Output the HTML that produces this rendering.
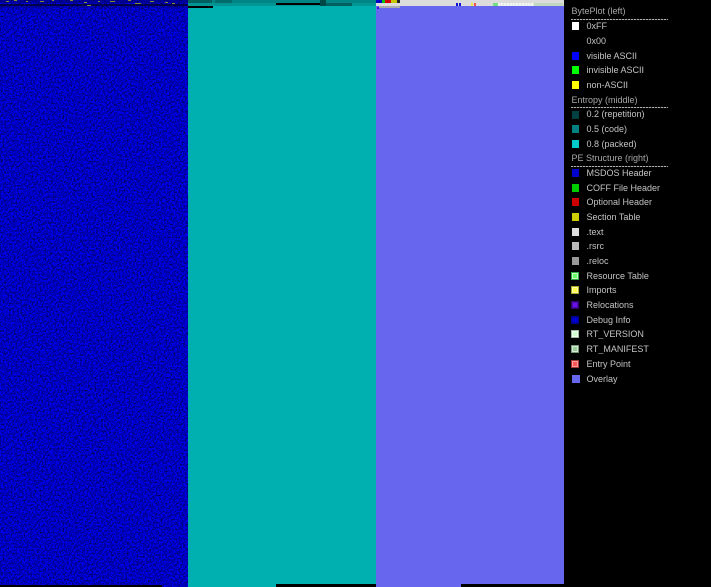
<!DOCTYPE html>
<html><head><meta charset="utf-8"><style>
html,body{margin:0;padding:0;background:#000;width:711px;height:587px;overflow:hidden}
.a{position:absolute}
.t{position:absolute;left:586.5px;font:9px/12px "Liberation Sans",sans-serif;color:#c4c4c4;white-space:nowrap;filter:blur(.35px)}
.h{left:571.5px;color:#a8a8a8}
.s{position:absolute;left:571.5px;width:7.5px;height:8px}
.b{box-sizing:border-box;left:571px;width:8px;height:8px;border:1px solid}
.l{position:absolute;left:571px;width:97px;height:1px;background:repeating-linear-gradient(90deg,#b0b0b0 0 2px,#333 2px 3px)}
</style></head><body>
<svg class="a" style="left:0;top:0" width="188" height="587">
<filter id="n" x="0" y="0" width="100%" height="100%" color-interpolation-filters="sRGB"><feTurbulence type="fractalNoise" baseFrequency="0.62" numOctaves="3" seed="9"/><feColorMatrix values="0 0 0 0 0 0 0 0 0 0 1.05 1.05 0 0 -0.3 0 0 0 0 1"/></filter>
<rect width="188" height="587" fill="#0000c0"/>
<rect width="188" height="587" filter="url(#n)"/>
<rect y="0" width="188" height="3" fill="#000070" opacity=".55"/>
<rect y="4" width="188" height="2" fill="#000030" opacity=".8"/>
<rect y="6" width="188" height="2" fill="#000070" opacity=".3"/>
<g fill="#8a8a38">
<rect x="6" y="1" width="3" height="1"/><rect x="14" y="0" width="3" height="1"/><rect x="26" y="1" width="2" height="1"/><rect x="40" y="1" width="4" height="1"/><rect x="52" y="0" width="2" height="1"/><rect x="70" y="0" width="3" height="1"/><rect x="84" y="2" width="3" height="1"/><rect x="98" y="1" width="2" height="1"/><rect x="110" y="1" width="5" height="1"/><rect x="128" y="0" width="3" height="1"/><rect x="150" y="1" width="4" height="1"/><rect x="165" y="2" width="3" height="1"/><rect x="87" y="5" width="4" height="1"/><rect x="135" y="3" width="6" height="1"/><rect x="172" y="3" width="3" height="1"/></g>
<rect y="585" width="162" height="2" fill="#000"/>
</svg>
<div class="a" style="left:188px;top:0;width:188px;height:587px;background:#00b0b0"></div>
<div class="a" style="left:188px;top:0;width:188px;height:3px;background:#008484"></div>
<div class="a" style="left:188px;top:3px;width:188px;height:3px;background:#009595"></div>
<div class="a" style="left:188px;top:0;width:24px;height:3px;background:#006060"></div>
<div class="a" style="left:215px;top:0;width:17px;height:3px;background:#006c6c"></div>
<div class="a" style="left:276px;top:3px;width:44px;height:2px;background:#000"></div>
<div class="a" style="left:320px;top:0;width:6px;height:6px;background:#004848"></div>
<div class="a" style="left:326px;top:3px;width:26px;height:3px;background:#006060"></div>
<div class="a" style="left:188px;top:6px;width:25px;height:2px;background:#000"></div>
<div class="a" style="left:276px;top:584px;width:100px;height:3px;background:#000"></div>
<div class="a" style="left:376px;top:0;width:188px;height:587px;background:#6666ee"></div>
<div class="a" style="left:376px;top:0;width:188px;height:6px;background:#dcdcdc"></div>
<div class="a" style="left:376px;top:0;width:6px;height:3px;background:#0000c8"></div>
<div class="a" style="left:382px;top:0;width:3px;height:3px;background:#00c800"></div>
<div class="a" style="left:385px;top:0;width:6px;height:3px;background:#d00000"></div>
<div class="a" style="left:391px;top:0;width:6px;height:3px;background:#c8c800"></div>
<div class="a" style="left:397px;top:0;width:3px;height:3px;background:#222"></div>
<div class="a" style="left:379px;top:6px;width:21px;height:2px;background:#aaa"></div>
<div class="a" style="left:377px;top:7px;width:2px;height:2px;background:#5010d0"></div>
<div class="a" style="left:456px;top:3px;width:2px;height:3px;background:#1010d0"></div>
<div class="a" style="left:459px;top:3px;width:2px;height:3px;background:#1010d0"></div>
<div class="a" style="left:471px;top:3px;width:2px;height:3px;background:#f0e040"></div>
<div class="a" style="left:474px;top:3px;width:2px;height:3px;background:#f05050"></div>
<div class="a" style="left:493px;top:3px;width:5px;height:3px;background:#70e080"></div>
<div class="a" style="left:498px;top:3px;width:36px;height:3px;background:repeating-linear-gradient(90deg,#f0f3f0 0 2px,#e2ebe2 2px 3px)"></div>
<div class="a" style="left:534px;top:3px;width:29px;height:3px;background:#c0d8c0"></div>
<div class="a" style="left:461px;top:584px;width:103px;height:3px;background:#000"></div>

<div class="t h" style="top:5px">BytePlot (left)</div><div class="l" style="top:19px"></div>
<div class="s" style="top:22px;background:#fff"></div><div class="t" style="top:20px">0xFF</div>
<div class="t" style="top:35px">0x00</div>
<div class="s" style="top:52px;background:#0000ff"></div><div class="t" style="top:49.5px">visible ASCII</div>
<div class="s" style="top:66px;background:#00ff00"></div><div class="t" style="top:64px">invisible ASCII</div>
<div class="s" style="top:81px;background:#ffff00"></div><div class="t" style="top:79px">non-ASCII</div>
<div class="t h" style="top:93.5px">Entropy (middle)</div><div class="l" style="top:107px"></div>
<div class="s" style="top:111px;background:#004040"></div><div class="t" style="top:108px">0.2 (repetition)</div>
<div class="s" style="top:125px;background:#008080"></div><div class="t" style="top:123px">0.5 (code)</div>
<div class="s" style="top:140px;background:#00cccc"></div><div class="t" style="top:137.5px">0.8 (packed)</div>
<div class="t h" style="top:152px">PE Structure (right)</div><div class="l" style="top:166px"></div>
<div class="s" style="top:169px;background:#0000cc"></div><div class="t" style="top:167px">MSDOS Header</div>
<div class="s" style="top:184px;background:#00cc00"></div><div class="t" style="top:181.5px">COFF File Header</div>
<div class="s" style="top:198px;background:#cc0000"></div><div class="t" style="top:196px">Optional Header</div>
<div class="s" style="top:213px;background:#cccc00"></div><div class="t" style="top:211px">Section Table</div>
<div class="s" style="top:228px;background:#dddddd"></div><div class="t" style="top:225.5px">.text</div>
<div class="s" style="top:242px;background:#bbbbbb"></div><div class="t" style="top:240px">.rsrc</div>
<div class="s" style="top:257px;background:#999999"></div><div class="t" style="top:255px">.reloc</div>
<div class="s b" style="top:272px;background:#66ff66;border-color:#2fae3f;box-shadow:inset 0 0 0 1px #c8f8c8"></div><div class="t" style="top:269.5px">Resource Table</div>
<div class="s b" style="top:286px;background:#ffff44;border-color:#a8a820;box-shadow:inset 0 0 0 1px #f8f8b0"></div><div class="t" style="top:284px">Imports</div>
<div class="s b" style="top:301px;background:#6a10ee;border-color:#330077;box-shadow:inset 0 0 0 1px #4a10a0"></div><div class="t" style="top:299px">Relocations</div>
<div class="s b" style="top:316px;background:#0000dd;border-color:#000088;box-shadow:inset 0 0 0 1px #0000aa"></div><div class="t" style="top:313.5px">Debug Info</div>
<div class="s b" style="top:330px;background:#ccffcc;border-color:#99bb99;box-shadow:inset 0 0 0 1px #f4fff4"></div><div class="t" style="top:328px">RT_VERSION</div>
<div class="s b" style="top:345px;background:#99cc99;border-color:#779977;box-shadow:inset 0 0 0 1px #d8e8d8"></div><div class="t" style="top:343px">RT_MANIFEST</div>
<div class="s b" style="top:360px;background:#ff5555;border-color:#aa3333;box-shadow:inset 0 0 0 1px #f8a0a0"></div><div class="t" style="top:357.5px">Entry Point</div>
<div class="s" style="top:374.5px;left:571.5px;width:8px;height:8px;background:#6666ee"></div><div class="t" style="top:373px">Overlay</div>
</body></html>
